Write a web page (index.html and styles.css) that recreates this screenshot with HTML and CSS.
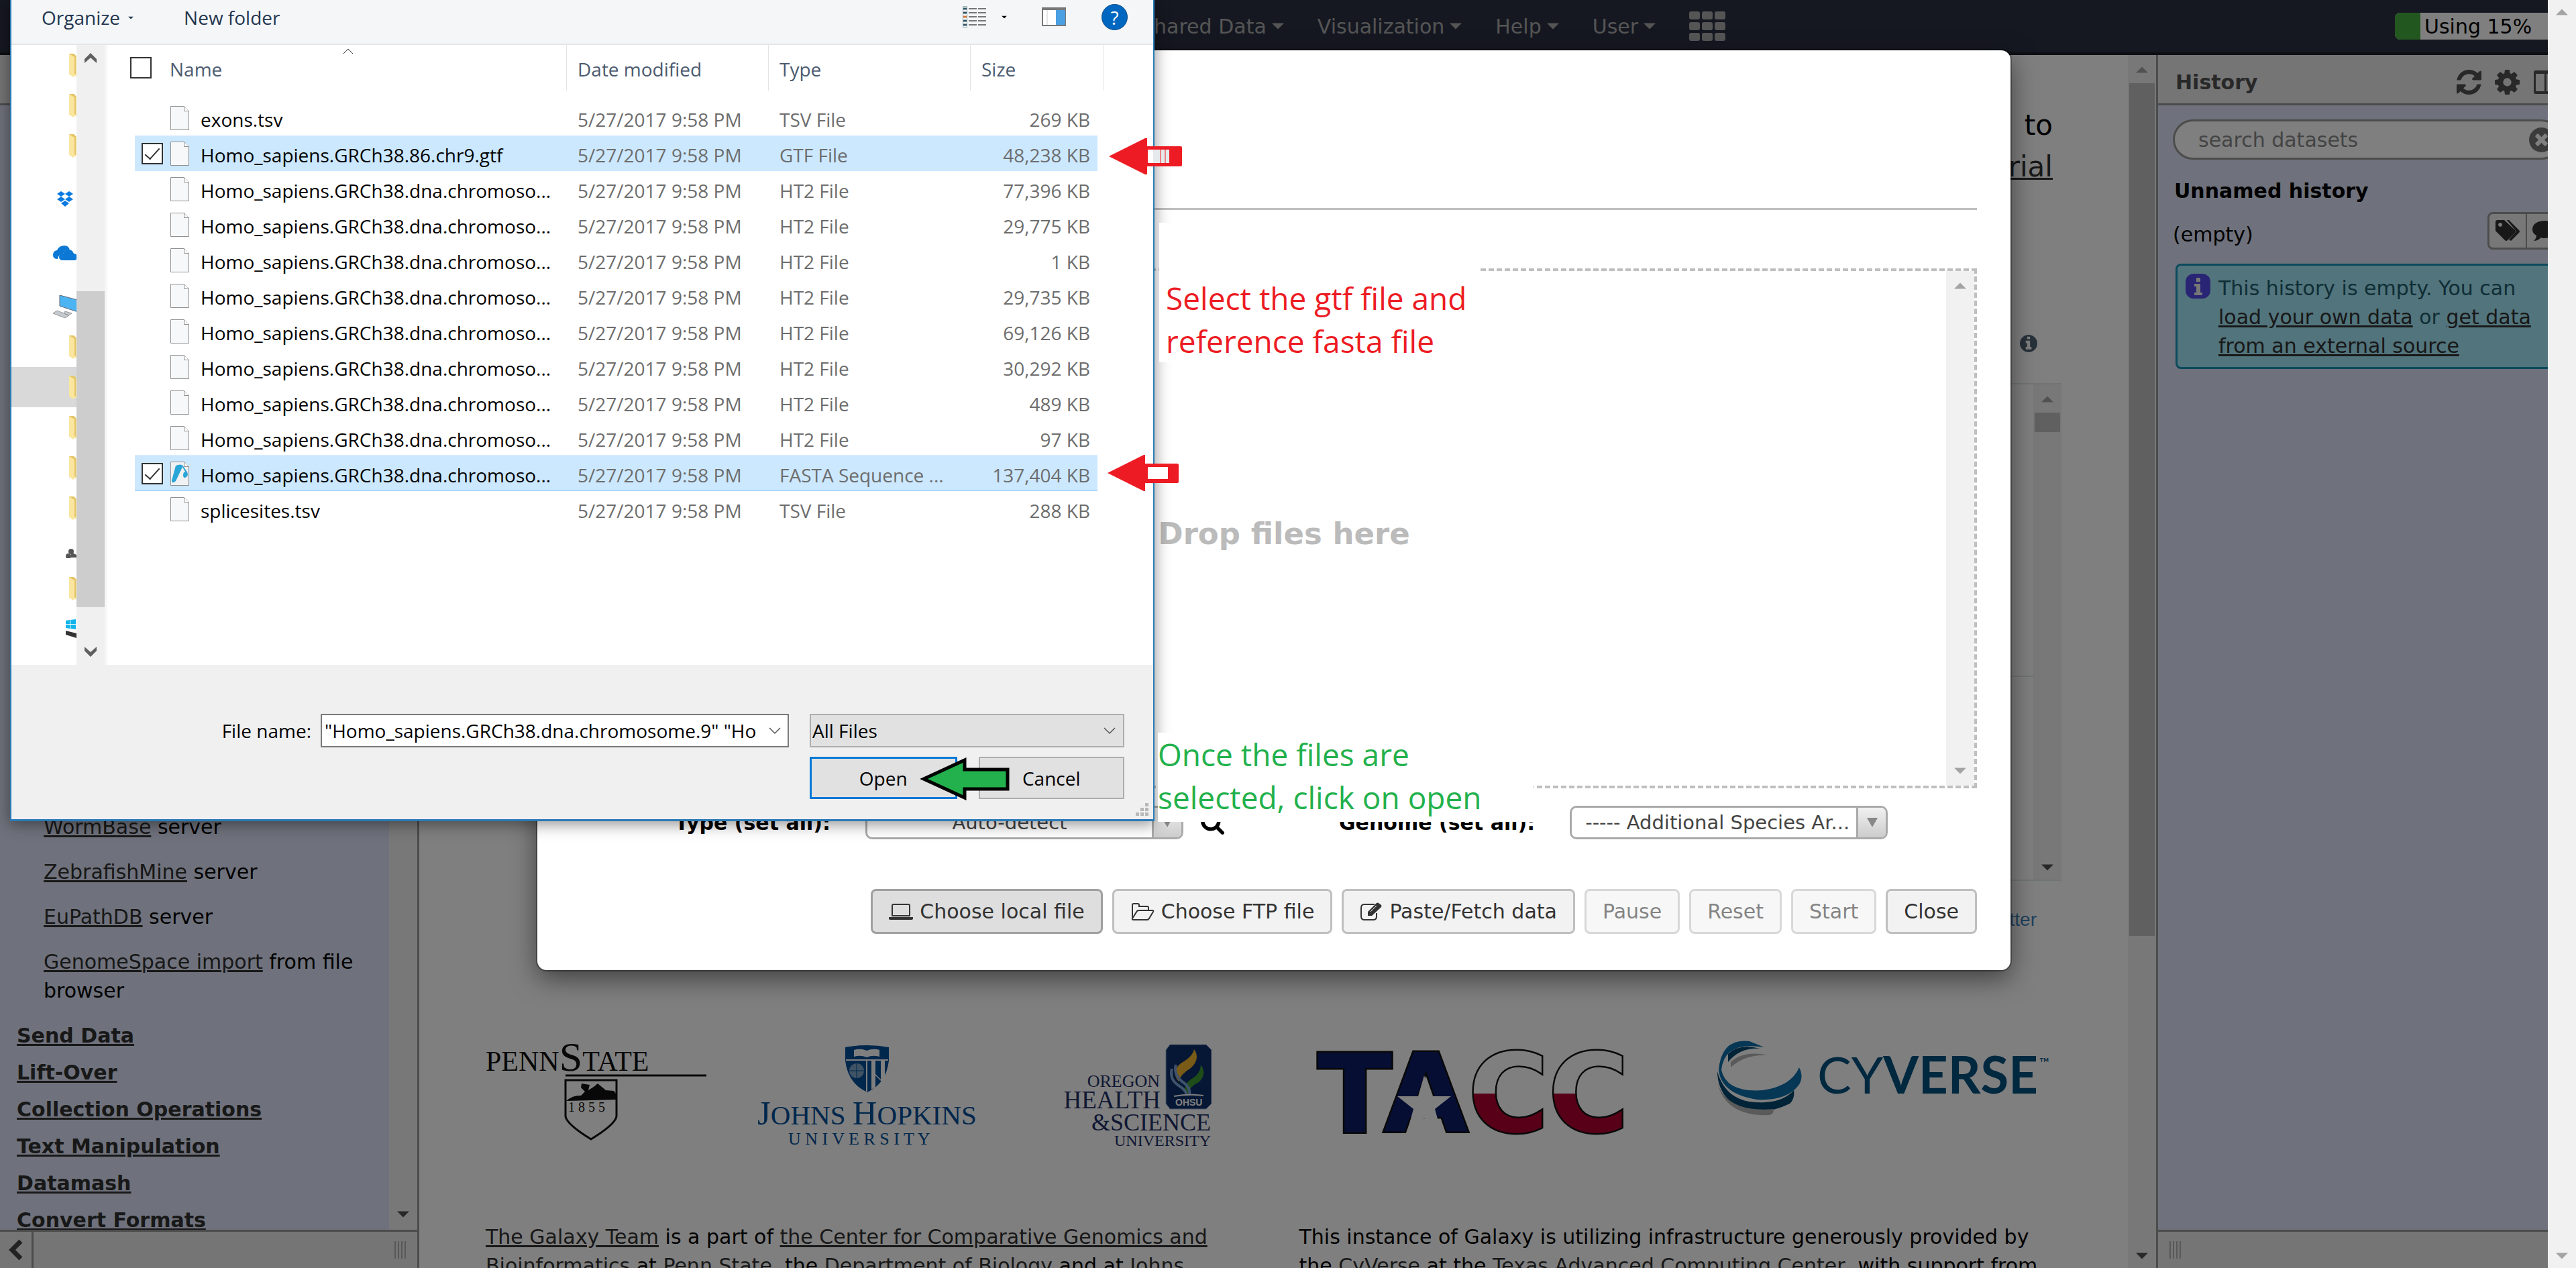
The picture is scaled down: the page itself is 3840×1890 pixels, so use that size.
FILE: index.html
```html
<!DOCTYPE html>
<html lang="en">
<head>
<meta charset="utf-8">
<title>Galaxy</title>
<link rel="stylesheet" href="styles.css">
</head>
<body>
<svg class="sprite" aria-hidden="true">
  <symbol id="i-folder" viewBox="0 0 24 36"><path d="M0 1h7l3 3h14v30H8l-2 2-4-3-2-1z" fill="#fbe6a0"/><path d="M0 1h7l3 3v28l-2-1V6L3 3z" fill="#e3c566"/></symbol>
  <symbol id="i-file" viewBox="0 0 28 36"><path d="M.5.5h20l7 7v28H.5z" fill="#f7f8f9" stroke="#8f8f8f"/><path d="M20.500.500v7h7" fill="#fff" stroke="#8f8f8f"/></symbol>
  <symbol id="i-up" viewBox="0 0 20 10"><path d="M0 10 10 0l10 10z"/></symbol>
  <symbol id="i-down" viewBox="0 0 20 10"><path d="M0 0h20L10 10z"/></symbol>
  <symbol id="i-chev" viewBox="0 0 20 12"><path d="M2 2l8 8 8-8" fill="none" stroke="#555" stroke-width="1.500"/></symbol>
  <symbol id="i-info" viewBox="128 128 1536 1536"><path d="M1152 1376v-160q0-14-9-23t-23-9h-96v-512q0-14-9-23t-23-9h-320q-14 0-23 9t-9 23v160q0 14 9 23t23 9h96v320h-96q-14 0-23 9t-9 23v160q0 14 9 23t23 9h448q14 0 23-9t9-23zm-128-896v-160q0-14-9-23t-23-9h-192q-14 0-23 9t-9 23v160q0 14 9 23t23 9h192q14 0 23-9t9-23zm640 416q0 209-103 385.500t-279.500 279.500-385.500 103-385.500-103-279.500-279.500-103-385.500 103-385.500 279.500-279.500 385.500-103 385.500 103 279.500 279.500 103 385.500z"/></symbol>
</svg>

<div class="page">
  <div class="app">
    <header class="masthead">
      <nav class="menu" aria-label="Main">
        <a href="#">Shared Data<svg class="tri"><use href="#i-down"/></svg></a>
        <a href="#">Visualization<svg class="tri"><use href="#i-down"/></svg></a>
        <a href="#">Help<svg class="tri"><use href="#i-down"/></svg></a>
        <a href="#">User<svg class="tri"><use href="#i-down"/></svg></a>
        <a href="#" aria-label="Apps"><svg class="apps" viewBox="0 0 54 44"><g fill="#aaa"><rect width="16" height="12" rx="3"/><rect x="19" width="16" height="12" rx="3"/><rect x="38" width="16" height="12" rx="3"/><rect y="16" width="16" height="12" rx="3"/><rect x="19" y="16" width="16" height="12" rx="3"/><rect x="38" y="16" width="16" height="12" rx="3"/><rect y="32" width="16" height="12" rx="3"/><rect x="19" y="32" width="16" height="12" rx="3"/><rect x="38" y="32" width="16" height="12" rx="3"/></g></svg></a>
      </nav>
      <div class="quota"><span class="quota-bar"></span><span>Using 15%</span></div>
    </header>

    <aside class="panel">
      <div class="panel-head"></div>
      <div class="tools">
        <div class="tool-list">
          <p class="tool"><a href="#">WormBase</a> server</p>
          <p class="tool"><a href="#">ZebrafishMine</a> server</p>
          <p class="tool"><a href="#">EuPathDB</a> server</p>
          <p class="tool"><a href="#">GenomeSpace import</a> from file browser</p>
          <a class="section" href="#">Send Data</a>
          <a class="section" href="#">Lift-Over</a>
          <a class="section" href="#">Collection Operations</a>
          <a class="section" href="#">Text Manipulation</a>
          <a class="section" href="#">Datamash</a>
          <a class="section" href="#">Convert Formats</a>
        </div>
        <div class="bar bar-end"><svg class="tri dark"><use href="#i-down"/></svg></div>
      </div>
      <div class="panel-foot">
        <button class="collapse" aria-label="Collapse panel"><svg viewBox="0 0 24 32" width="24" height="32"><path d="M19 3 6 16l13 13" fill="none" stroke="#444" stroke-width="7"/></svg></button>
        <span class="grip"></span>
      </div>
    </aside>

    <main class="center">
      <div class="center-body">
        <p class="hero">to<br><a href="#">tutorial</a></p>
        <div class="feed-head"><svg class="feed-info"><use href="#i-info"/></svg></div>
        <div class="feed">
          <div class="feed-list"><div class="tweet"></div></div>
          <div class="bar bar-split">
            <svg class="tri"><use href="#i-up"/></svg>
            <span class="thumb thumb-small"></span>
            <svg class="tri dark"><use href="#i-down"/></svg>
          </div>
        </div>
        <p class="feed-more"><a href="#">View on Twitter</a></p>
        <div class="columns">
          <section>
            <div class="logos">
              <svg width="329" height="160" viewBox="0 0 329 160" role="img" aria-label="Penn State">
                <text class="lg-serif" y="45" font-size="42">PENN<tspan font-size="62">S</tspan>TATE</text>
                <path d="M119 52h210" stroke="#111" stroke-width="3"/>
                <path d="M119 59h76v54q-2 12-38 34-36-22-38-34z" fill="none" stroke="#111" stroke-width="3"/>
                <path d="M120 90q10-9 22-8l6-6-6-6 1-6 12 2-2 8 8-5 6-5 12 10 12 1 3 4v9z" fill="#111"/>
                <text class="lg-serif" x="123" y="106" font-size="20">1 8 5 5</text>
              </svg>
              <svg width="328" height="160" viewBox="0 0 328 160" role="img" aria-label="Johns Hopkins University">
                <path d="M131 10q33-6 65 0v20q-4 34-32 47-29-13-33-47z" fill="#004e98"/>
                <path d="M132 29h63M163 29v47" stroke="#fff" stroke-width="2"/><path d="M144 14q10-3 19 1 10-4 19-1v10q-10-3-19 1-9-4-19-1z" fill="#fff"/>
                <circle cx="148" cy="45" r="11" fill="#7fa6cb"/><path d="M137 45h22M148 34v22" stroke="#004e98"/>
                <path d="M170 30h6v20l8 8V30h6v36l-8-8-6-6v18l-6 3z" fill="#fff"/>
                <text class="lg-serif blue" y="125" font-size="51">J<tspan font-size="41">OHNS </tspan>H<tspan font-size="41">OPKINS</tspan></text>
                <text class="lg-serif blue" x="46" y="155" font-size="26">U N I V E R S I T Y</text>
              </svg>
              <svg width="273" height="160" viewBox="0 0 273 160" role="img" aria-label="Oregon Health and Science University">
                <path d="M211 6h54l8 8v80l-8 8h-54l-6-8V14z" fill="#0c2f6b" stroke="#9fb4d8"/>
                <path d="M247 13q10 14-5 28-16 10-18 20-12-14 3-27 18-10 20-21z" fill="#f3b42c"/>
                <path d="M257 36q10 14-3 26-16 8-17 20-10-13 5-24 15-8 15-22z" fill="#3f9b35"/>
                <path d="M220 36q-4 14 9 25 13 8 11 20M214 42q-4 16 10 25 11 7 12 14" fill="none" stroke="#7fa6d8" stroke-width="4"/>
                <path d="M217 83q22-4 44-1" stroke="#fff" stroke-width="2" fill="none"/>
                <text class="lg-ohsu" x="219" y="97" font-size="14">OHSU</text>
                <g class="lg-serif navy" text-anchor="end"><text x="196" y="69" font-size="26">OREGON</text><text x="197" y="101" font-size="37">HEALTH</text><text x="272" y="134" font-size="36">&amp;SCIENCE</text><text x="272" y="157" font-size="24">UNIVERSITY</text></g>
              </svg>
            </div>
            <p class="credit"><a href="#">The Galaxy Team</a> is a part of <a href="#">the Center for Comparative Genomics and Bioinformatics</a> at <a href="#">Penn State</a>, the <a href="#">Department of Biology</a> and at <a href="#">Johns</a></p>
          </section>
          <section>
            <div class="logos">
              <svg width="545" height="160" viewBox="0 0 545 160" role="img" aria-label="TACC">
                <defs><linearGradient id="cc" x1="0" y1="0" x2="0" y2="1"><stop offset=".5" stop-color="#fff"/><stop offset=".5" stop-color="#b00030"/></linearGradient></defs>
                <text class="lg-tacc" x="27" y="136" font-size="163"><tspan fill="#0d1c66">TA</tspan><tspan fill="url(#cc)">CC</tspan></text>
                <path d="m186 52 9 31h31l-24 19 9 33-25-19-25 19 9-33-24-19h31z" fill="#fff"/>
              </svg>
              <svg width="500" height="115" viewBox="0 0 500 115" role="img" aria-label="CyVerse">
                <path d="M72 10Q12 0 8 44 16 78 70 74q42-6 54-34 8 16-2 28-18 22-60 20Q8 80 4 44 8-4 50 1z" fill="#0c6fab"/>
                <path d="M2 46Q16 96 74 92q28-2 42-18 2 12-6 20-54 26-92-6Q2 70 2 46zM18 20Q34 4 66 12q-30-2-48 20z" fill="#00466f"/>
                <path d="M2 62q14 46 84 40 0 8-6 9Q14 114 2 62zM22 32q20-18 56-10-34-2-56 18z" fill="#b5b5b5"/>
                <text class="lg-cy" x="151" y="79" font-size="76">CY<tspan font-weight="700">VERSE</tspan></text>
                <text class="lg-cy" x="482" y="40" font-size="20">™</text>
              </svg>
            </div>
            <p class="credit">This instance of Galaxy is utilizing infrastructure generously provided by the <a href="#">CyVerse</a> at the <a href="#">Texas Advanced Computing Center</a>, with support from</p>
          </section>
        </div>
      </div>
      <div class="bar bar-split">
        <svg class="tri"><use href="#i-up"/></svg>
        <span class="thumb thumb-main"></span>
        <svg class="tri dark"><use href="#i-down"/></svg>
      </div>
    </main>

    <aside class="panel history">
      <div class="panel-head">
        <h2>History</h2>
        <svg width="37" height="37" viewBox="128 128 1536 1536"><path d="M1639 1056q0 5-1 7-64 268-268 434.500t-478 166.500q-146 0-282.500-55t-243.500-157l-129 129q-19 19-45 19t-45-19-19-45v-448q0-26 19-45t45-19h448q26 0 45 19t19 45-19 45l-137 137q71 66 161 102t187 36q134 0 250-65t186-179q11-17 53-117 8-23 30-23h192q13 0 22.500 9.500t9.500 22.500zm25-800v448q0 26-19 45t-45 19h-448q-26 0-45-19t-19-45 19-45l138-138q-148-137-349-137-134 0-250 65t-186 179q-11 17-53 117-8 23-30 23h-199q-13 0-22.500-9.500t-9.500-22.500v-7q65-268 270-434.500t480-166.500q146 0 284 55.500t245 156.500l130-129q19-19 45-19t45 19 19 45z"/></svg>
        <svg width="37" height="37" viewBox="128 128 1536 1536"><path d="M1152 896q0-106-75-181t-181-75-181 75-75 181 75 181 181 75 181-75 75-181zm512-109v222q0 12-8 23t-20 13l-185 28q-19 54-39 91 35 50 107 138 10 12 10 25t-9 23q-27 37-99 108t-94 71q-12 0-26-9l-138-108q-44 23-91 38-16 136-29 186-7 28-36 28h-222q-14 0-24.500-8.500t-11.500-21.500l-28-184q-49-16-90-37l-141 107q-10 9-25 9-14 0-25-11-126-114-165-168-7-10-7-23 0-12 8-23 15-21 51-66.500t54-70.500q-27-50-41-99l-183-27q-13-2-21-12.500t-8-23.500v-222q0-12 8-23t19-13l186-28q14-46 39-92-40-57-107-138-10-12-10-24 0-10 9-23 26-36 98.500-107.500t94.500-71.500q13 0 26 10l138 107q44-23 91-38 16-136 29-186 7-28 36-28h222q14 0 24.500 8.500t11.500 21.500l28 184q49 16 90 37l142-107q9-9 24-9 13 0 25 10 129 119 165 170 7 8 7 22 0 12-8 23-15 21-51 66.500t-54 70.500q26 50 41 98l183 28q13 2 21 12.500t8 23.500z"/></svg>
        <svg width="37" height="37" viewBox="0 0 37 37"><path d="M1 4q0-3 3-3h29q3 0 3 3v29q0 3-3 3H4q-3 0-3-3zm3 2v26h13V6zm16 0v26h13V6z" fill-rule="evenodd"/></svg>
      </div>
      <div class="history-body">
        <div class="search">
          <input type="text" aria-label="search datasets" placeholder="search datasets">
          <svg width="37" height="37" viewBox="128 128 1536 1536" fill="#777"><path d="M1277 1122q0-26-19-45l-181-181 181-181q19-19 19-45 0-27-19-46l-90-90q-19-19-46-19-26 0-45 19l-181 181-181-181q-19-19-45-19-27 0-46 19l-90 90q-19 19-19 46 0 26 19 45l181 181-181 181q-19 19-19 45 0 27 19 46l90 90q19 19 46 19 26 0 45-19l181-181 181 181q19 19 45 19 27 0 46-19l90-90q19-19 19-46zm387-226q0 209-103 385.500t-279.500 279.500-385.500 103-385.500-103-279.500-279.500-103-385.500 103-385.500 279.500-279.500 385.500-103 385.500 103 279.500 279.500 103 385.500z"/></svg>
        </div>
        <h3>Unnamed history</h3>
        <div class="history-size">
          <span class="size-text">(empty)</span>
          <span class="tag-buttons">
            <button aria-label="Edit tags"><svg width="38" height="32" viewBox="0 0 38 32"><path d="M1 3q0-3 3-3h10l16 15q2 2 0 4L19 30q-2 2-4 0L1 16zm7 1a3 3 0 1 0 .1 0z" fill-rule="evenodd"/><path d="M18 0h3l15 15q2 2 0 4L24 31l-3-2 11-12z"/></svg></button>
            <button aria-label="Annotate"><svg width="38" height="32" viewBox="0 0 38 32"><path d="M19 1c10 0 18 5 18 13s-8 13-18 13c-2 0-4 0-5-1-3 3-7 5-11 5 2-2 4-4 4-8-4-2-6-5-6-9C1 6 9 1 19 1z"/></svg></button>
          </span>
        </div>
        <div class="notice">
          <span class="notice-icon"><svg width="12" height="26" viewBox="0 0 12 26"><path d="M3 0h6v6H3zM0 9h9v13h3v4H0v-4h3v-9H0z" fill="#eee"/></svg></span>
          <p>This history is empty. You can<br><a href="#">load your own data</a> or <a href="#">get data</a><br><a href="#">from an external source</a></p>
        </div>
      </div>
      <div class="panel-foot"><span class="grip"></span></div>
    </aside>
  </div>

  <div class="backdrop">
    <div class="modal" role="dialog" aria-label="Upload">
      <div class="modal-head"></div>
      <div class="drop">
        <div class="drop-label"><svg width="60" height="44" viewBox="0 0 60 44"><path d="M2 40h56V4H2zM20 26l10-12 10 12" fill="none" stroke="#bbb" stroke-width="4"/></svg>Drop files here</div>
        <div class="bar bar-split plain">
          <svg class="tri"><use href="#i-up"/></svg>
          <svg class="tri"><use href="#i-down"/></svg>
        </div>
      </div>
      <div class="options">
        <label for="type">Type (set all):</label>
        <span class="pick pick-center"><select id="type"><option>Auto-detect</option></select><span class="pick-arrow"><svg viewBox="0 0 16 14" width="16" height="14"><path d="M0 0h16L8 14z"/></svg></span></span>
        <svg class="lookup" width="35" height="35" viewBox="64 128 1664 1664"><path d="M1216 832q0-185-131.500-316.500t-316.500-131.500-316.500 131.500-131.500 316.500 131.500 316.500 316.500 131.500 316.500-131.500 131.500-316.500zm512 832q0 52-38 90t-90 38q-54 0-90-38l-343-342q-179 124-399 124-143 0-273.500-55.500t-225-150-150-225-55.500-273.500 55.500-273.500 150-225 225-150 273.500-55.500 273.500 55.500 225 150 150 225 55.500 273.500q0 220-124 399l343 343q37 37 37 90z"/></svg>
        <label for="genome">Genome (set all):</label>
        <span class="pick"><select id="genome"><option>----- Additional Species Ar...</option></select><span class="pick-arrow"><svg viewBox="0 0 16 14" width="16" height="14"><path d="M0 0h16L8 14z"/></svg></span></span>
      </div>
      <div class="actions">
        <button class="active"><svg width="36" height="26" viewBox="0 0 36 26"><path d="M7 2h22q2 0 2 2v15H5V4q0-2 2-2z" fill="none" stroke="#333" stroke-width="2"/><path d="M0 21h36v2q0 2-3 2H3q-3 0-3-2z"/></svg>Choose local file</button>
        <button><svg width="36" height="28" viewBox="0 0 36 28"><path d="M3 23V4q0-2 2-2h6q2 0 2 2v2h12q2 0 2 2v4M3 24l7-11q1-1 3-1h20q2 0 1 2l-6 10q-1 2-3 2H5q-3 0-2-2z" fill="none" stroke="#333" stroke-width="2"/></svg>Choose FTP file</button>
        <button><svg width="34" height="28" viewBox="0 0 34 28"><path d="M22 3H7Q2 3 2 8v13q0 5 5 5h13q5 0 5-5v-5" fill="none" stroke="#333" stroke-width="2"/><path d="M12 20v-6L25 1q2-1 3 0l4 3q1 1 0 3L18 20z"/><path d="m16 14 9-9" stroke="#fff"/></svg>Paste/Fetch data</button>
        <button disabled>Pause</button>
        <button disabled>Reset</button>
        <button disabled>Start</button>
        <button>Close</button>
      </div>
    </div>
  </div>

  <div class="note note-red">Select the gtf file and<br>reference fasta file</div>
  <div class="note note-green">Once the files are<br>selected, click on open</div>

  <div class="picker" role="dialog" aria-label="Open">
    <div class="picker-bar">
      <button>Organize <svg width="8" height="5" viewBox="0 0 20 10"><use href="#i-down"/></svg></button>
      <button>New folder</button>
      <span class="picker-tools">
        <svg width="36" height="32" viewBox="0 0 36 32"><path d="M.5.5h6v31h-6z" fill="#fff" stroke="#8aa"/><path d="M1 4h5M1 10h5M1 22h5M1 28h5" stroke="#356" stroke-width="3"/><path d="M1 16h5" stroke="#c73" stroke-width="3"/><path d="M9 4h27M9 10h27M9 16h27M9 22h27M9 28h27" stroke="#777" stroke-width="2" stroke-dasharray="12 2"/></svg>
        <svg class="tool-caret" width="8" height="5" viewBox="0 0 20 10"><use href="#i-down"/></svg>
        <svg width="36" height="28" viewBox="0 0 36 28"><path d="M1 1h34v26H1z" fill="#fff" stroke="#777" stroke-width="2"/><path d="M0 0h36v4H0z" fill="#777"/><path d="M21 4h14v22H21z" fill="#4b9fe3"/><path d="M8 4v22" stroke="#ccc"/></svg>
        <span class="help">?</span>
      </span>
    </div>
    <div class="picker-main">
      <div class="tree">
        <div class="tree-row"><svg class="fold"><use href="#i-folder"/></svg></div>
        <div class="tree-row"><svg class="fold"><use href="#i-folder"/></svg></div>
        <div class="tree-row"><svg class="fold"><use href="#i-folder"/></svg></div>
        <div class="tree-row top-level"><svg width="36" height="24" viewBox="-6 0 36 24" fill="#0a7be0"><path d="m6 0 6 4-6 4-6-4zm12 0 6 4-6 4-6-4zM6 8l6 4-6 4-6-4zm12 0 6 4-6 4-6-4zm-6 6 6 4-6 5-6-5z"/></svg></div>
        <div class="tree-row top-level"><svg width="36" height="22" viewBox="0 0 36 22" fill="#0a78d4"><path d="M7 20q-7 0-7-6t6-7Q9 0 17 0q6 0 8 6-8 0-10 6-7 1-8 8z"/><path d="M15 22q-6 0-6-5t6-5q2-6 8-6t8 6q5 0 5 5t-5 5z"/></svg></div>
        <div class="tree-row top-level"><svg width="36" height="34" viewBox="0 0 36 34"><path d="m10 0 30 8v18L10 16z" fill="#4db4f3" stroke="#567"/><path d="m18 24 10 3-5 3-7-3zM6 23l18 7-6 4-18-7z" fill="#c4cacf" stroke="#999"/></svg></div>
        <div class="tree-row"><svg class="fold"><use href="#i-folder"/></svg></div>
        <div class="tree-row current"><svg class="fold"><use href="#i-folder"/></svg></div>
        <div class="tree-row"><svg class="fold"><use href="#i-folder"/></svg></div>
        <div class="tree-row"><svg class="fold"><use href="#i-folder"/></svg></div>
        <div class="tree-row"><svg class="fold"><use href="#i-folder"/></svg></div>
        <div class="tree-row drive share"><svg width="24" height="14" viewBox="0 0 24 14" fill="#555"><circle cx="8" cy="4" r="4"/><circle cx="4" cy="11" r="4"/><path d="m8 5 10 5v3H8z"/></svg></div>
        <div class="tree-row"><svg class="fold"><use href="#i-folder"/></svg></div>
        <div class="tree-row drive"><svg width="24" height="28" viewBox="0 0 24 28"><path d="m0 2 6-1v6H0zm7-1 8-1v7H7zM0 8h6v6l-6-1zm7 0h8v7l-8-1z" fill="#12b5ea"/><path d="m0 17 16 4v7L0 23z" fill="#333"/></svg></div>
      </div>
      <div class="bar bar-split tree-bar">
        <svg width="18" height="15" viewBox="0 0 18 15"><path d="M0 9 9 0l9 9v6L9 7l-9 8z"/></svg>
        <span class="thumb thumb-tree"></span>
        <svg width="18" height="15" viewBox="0 0 18 15"><path d="M0 6l9 9 9-9V0L9 8 0 0z"/></svg>
      </div>
      <div class="files">
        <table>
          <colgroup><col class="c-gap"><col class="c-check"><col class="c-name"><col class="c-date"><col class="c-type"><col class="c-size"><col class="c-gap"></colgroup>
          <thead><tr><th colspan="2"><input type="checkbox" aria-label="Select all"></th><th class="sorted">Name<svg class="sort" width="16" height="9" viewBox="0 0 16 9"><path d="m1 8 7-7 7 7" fill="none" stroke="#333"/></svg></th><th>Date modified</th><th>Type</th><th colspan="2">Size</th></tr></thead>
          <tbody>
            <tr><td></td><td></td><td><svg class="doc"><use href="#i-file"/></svg>exons.tsv</td><td>5/27/2017 9:58 PM</td><td>TSV File</td><td>269 KB</td><td></td></tr>
            <tr class="picked"><td></td><td><input type="checkbox" checked aria-label="Homo_sapiens.GRCh38.86.chr9.gtf"></td><td><svg class="doc"><use href="#i-file"/></svg>Homo_sapiens.GRCh38.86.chr9.gtf</td><td>5/27/2017 9:58 PM</td><td>GTF File</td><td>48,238 KB</td><td></td></tr>
            <tr><td></td><td></td><td><svg class="doc"><use href="#i-file"/></svg>Homo_sapiens.GRCh38.dna.chromoso...</td><td>5/27/2017 9:58 PM</td><td>HT2 File</td><td>77,396 KB</td><td></td></tr>
            <tr><td></td><td></td><td><svg class="doc"><use href="#i-file"/></svg>Homo_sapiens.GRCh38.dna.chromoso...</td><td>5/27/2017 9:58 PM</td><td>HT2 File</td><td>29,775 KB</td><td></td></tr>
            <tr><td></td><td></td><td><svg class="doc"><use href="#i-file"/></svg>Homo_sapiens.GRCh38.dna.chromoso...</td><td>5/27/2017 9:58 PM</td><td>HT2 File</td><td>1 KB</td><td></td></tr>
            <tr><td></td><td></td><td><svg class="doc"><use href="#i-file"/></svg>Homo_sapiens.GRCh38.dna.chromoso...</td><td>5/27/2017 9:58 PM</td><td>HT2 File</td><td>29,735 KB</td><td></td></tr>
            <tr><td></td><td></td><td><svg class="doc"><use href="#i-file"/></svg>Homo_sapiens.GRCh38.dna.chromoso...</td><td>5/27/2017 9:58 PM</td><td>HT2 File</td><td>69,126 KB</td><td></td></tr>
            <tr><td></td><td></td><td><svg class="doc"><use href="#i-file"/></svg>Homo_sapiens.GRCh38.dna.chromoso...</td><td>5/27/2017 9:58 PM</td><td>HT2 File</td><td>30,292 KB</td><td></td></tr>
            <tr><td></td><td></td><td><svg class="doc"><use href="#i-file"/></svg>Homo_sapiens.GRCh38.dna.chromoso...</td><td>5/27/2017 9:58 PM</td><td>HT2 File</td><td>489 KB</td><td></td></tr>
            <tr><td></td><td></td><td><svg class="doc"><use href="#i-file"/></svg>Homo_sapiens.GRCh38.dna.chromoso...</td><td>5/27/2017 9:58 PM</td><td>HT2 File</td><td>97 KB</td><td></td></tr>
            <tr class="picked focused"><td></td><td><input type="checkbox" checked aria-label="Homo_sapiens.GRCh38.dna.chromosome.9"></td><td><svg class="doc" viewBox="0 0 28 36"><path d="M.5.5h20l7 7v28H.5z" fill="#f0f1f2" stroke="#8f8f8f"/><path d="M20.500.500v7h7" fill="#fff" stroke="#8f8f8f"/><path d="M8 6q9-4 12 2l4 6q4 6 0 9-5 3-5-3 0-4 3-5l-4-7-10 21q-6 5-6-1z" fill="#2aa5d8"/></svg>Homo_sapiens.GRCh38.dna.chromoso...</td><td>5/27/2017 9:58 PM</td><td>FASTA Sequence ...</td><td>137,404 KB</td><td></td></tr>
            <tr><td></td><td></td><td><svg class="doc"><use href="#i-file"/></svg>splicesites.tsv</td><td>5/27/2017 9:58 PM</td><td>TSV File</td><td>288 KB</td><td></td></tr>
          </tbody>
        </table>
      </div>
    </div>
    <div class="picker-foot">
      <label for="fname">File name:</label>
      <span class="combo"><input id="fname" type="text" value='"Homo_sapiens.GRCh38.dna.chromosome.9" "Homo_sapiens.GRCh38.86.chr9.gtf"'><svg width="20" height="12"><use href="#i-chev"/></svg></span>
      <span class="filter"><select aria-label="File type"><option>All Files</option></select><svg width="20" height="12"><use href="#i-chev"/></svg></span>
      <span class="picker-actions"><button class="primary">Open</button><button>Cancel</button></span>
    </div>
    <svg class="resize" width="20" height="20" viewBox="0 0 20 20" fill="#b8b8b8"><path d="M14 0h5v5h-5zM14 7h5v5h-5zM7 7h5v5H7zM14 14h5v5h-5zM7 14h5v5H7zM0 14h5v5H0z"/></svg>
  </div>

  <svg class="arrow arrow-one" width="110" height="54" viewBox="0 0 110 54"><path d="M0 27 54 0h3v12h50q2 0 2 2v26q0 2-2 2H57v12h-3z" fill="#ed1c24"/><path d="M58 17h32v20H58z" fill="#e6e9ec"/><path d="M58 17h8v20h-8z" fill="#fff"/><path d="M77 17v20M84 17v20" stroke="#ed1c24"/></svg>
  <svg class="arrow arrow-two" width="108" height="54" viewBox="0 0 108 54"><path d="M0 27 54 0h2v13h48q2 0 2 2v25q0 2-2 2H56v12h-2z" fill="#ed1c24"/><path d="M60 18h30v18H60z" fill="#fff"/></svg>
  <svg class="arrow arrow-open" width="136" height="66" viewBox="0 0 136 66"><path d="M5 33 66 5v14h64v29H66v13z" fill="#22b14c" stroke="#000" stroke-width="5"/></svg>
</div>
<div class="bar bar-split plain page-bar">
  <svg class="tri"><use href="#i-up"/></svg>
  <svg class="tri"><use href="#i-down"/></svg>
</div>
</body>
</html>
```
FILE: styles.css
```css
* { box-sizing: border-box; }
body {
  margin: 0;
  height: 100vh;
  display: flex;
  overflow: hidden;
  background: #fff;
  color: #000;
  font: 30px/43px "DejaVu Sans", Verdana, sans-serif;
}
p, h2, h3 { margin: 0; }
h2, h3 { font-size: 30px; }
a { color: #303030; text-decoration-thickness: 3px; }
svg { flex: none; display: block; }
button, input, select { font: inherit; color: inherit; }
.sprite { position: absolute; width: 0; height: 0; }
.page { flex: 1; position: relative; overflow: hidden; }

/* application frame: runs on under the window scrollbar */
.app {
  width: calc(100% + 41px);
  height: 100%;
  display: grid;
  grid-template: 82px minmax(0, 1fr) / 625px minmax(0, 1fr) 625px;
}
.masthead {
  grid-column: 1 / -1;
  background: #2c3143;
  border-bottom: 4px solid #1d1f29;
  display: flex;
  align-items: center;
  justify-content: space-between;
}
.menu { display: flex; align-items: center; margin-left: 1676px; color: #aaa; }
.menu a { display: flex; align-items: center; gap: 8px; padding: 0 25px; color: #aaa; text-decoration: none; }
.tri { width: 18px; height: 10px; fill: #a3a3a3; }
.menu .tri { fill: #aaa; }
.tri.dark { fill: #505050; }
.apps { width: 54px; height: 44px; }
.quota { display: flex; align-items: center; gap: 6px; width: 269px; height: 40px; background: #fff; border-radius: 8px; overflow: hidden; }
.quota-bar { width: 38px; height: 40px; background: #44ae40; }

/* side panels */
.panel { display: flex; flex-direction: column; min-height: 0; background: #dfe5f9; border-right: 3px solid #999; }
.history { border-right: 0; border-left: 3px solid #999; }
.panel-head { flex: none; height: 75px; background: #ebebeb; border-bottom: 3px solid #999; display: flex; align-items: center; gap: 20px; padding: 8px 26px 0; fill: #505050; color: #505050; }
.panel-head h2 { margin-right: auto; }
.panel-foot { flex: none; height: 57px; background: #ebebeb; border-top: 3px solid #999; display: flex; align-items: center; justify-content: space-between; }
.history .panel-foot { padding-left: 17px; }
.collapse { width: 50px; height: 54px; padding: 0; border: 0; border-right: 3px solid #999; background: none; display: grid; place-items: center; }
.grip { width: 20px; height: 26px; margin-right: 14px; background: repeating-linear-gradient(90deg, #b0b0b0 0 2px, transparent 2px 5px); }
.tools { flex: 1; display: flex; min-height: 0; }
.tool-list { flex: 1; display: flex; flex-direction: column; justify-content: flex-end; align-items: flex-start; overflow: hidden; padding-left: 25px; }
.tool { padding: 0 0 24px 40px; }
.section { font-weight: 700; margin-bottom: 12px; }
.section:last-child { margin-bottom: -7px; }

/* scrollbars */
.bar { flex: none; width: 42px; background: #f1f1f1; display: flex; flex-direction: column; align-items: center; padding: 17px 0 13px; }
.bar-end { justify-content: flex-end; padding-bottom: 18px; }
.bar-split .tri:last-child { margin-top: auto; }
.plain { padding-bottom: 17px; }
.page-bar { padding-top: 13px; padding-bottom: 13px; }
.thumb { width: 38px; background: #c1c1c1; margin-top: 15px; }
.thumb-small { height: 29px; }
.thumb-main { height: 1271px; }

/* centre */
.center { display: flex; min-height: 0; overflow: hidden; background: #fff; }
.center-body { flex: 1; padding: 74px 99px 0; }
.hero { font-size: 42px; line-height: 62px; text-align: right; padding-right: 13px; }
.feed-head { height: 60px; margin: 202px 0 29px; padding-right: 36px; display: flex; align-items: center; justify-content: flex-end; }
.feed-info { width: 26px; height: 26px; fill: #4f6273; }
.feed { width: 55%; margin-left: auto; height: 742px; border: 2px solid #e1e8ed; border-right: 0; display: flex; }
.feed-list { flex: 1; }
.tweet { height: 436px; border-bottom: 2px solid #e1e8ed; }
.feed-more { margin-top: 36px; padding-right: 37px; text-align: right; font-family: "Liberation Sans", sans-serif; font-size: 28px; }
.feed-more a { color: #3f84bd; text-decoration: none; }
.columns { display: grid; grid-template-columns: 1fr 1fr; gap: 76px; margin-top: 159px; }
.logos { display: flex; gap: 76px; height: 160px; margin-bottom: 111px; }
.lg-serif { font-family: "Liberation Serif", serif; fill: #111; }
.blue { fill: #004e98; }
.navy { fill: #1d2f66; }
.lg-ohsu { font-family: "Liberation Sans", sans-serif; font-weight: 700; fill: #fff; }
.lg-tacc { font-family: "DejaVu Sans", sans-serif; font-weight: 700; stroke: #111; stroke-width: 5px; paint-order: stroke; }
.lg-cy { font-family: Lato, sans-serif; fill: #00507f; }

/* history */
.history-body { flex: 1; min-height: 0; overflow: hidden; padding: 21px 21px 0 22px; }
.search { height: 60px; border: 3px solid #999; border-radius: 30px; background: #fff; display: flex; align-items: center; padding: 0 8px 0 35px; }
.search input { flex: 1; min-width: 0; border: 0; padding: 0; background: none; outline: 0; }
.search input::placeholder { color: #888; }
.history h3 { margin: 25px 0 10px 2px; }
.history-size { display: flex; justify-content: space-between; align-items: center; }
.size-text { padding-top: 10px; }
.tag-buttons { display: flex; border: 3px solid #999; border-radius: 8px; height: 56px; margin-right: -4px; background: #f0f0f0; }
.tag-buttons button { width: 54px; border: 0; padding: 0; background: none; display: grid; place-items: center; fill: #303030; }
.tag-buttons button + button { border-left: 2px solid #999; }
.notice { margin: 21px -10px 0 4px; height: 157px; display: flex; gap: 12px; padding: 12px; background: #a4e8f8; border: 3px solid #1894b8; border-radius: 8px; color: #205c6c; }
.notice-icon { width: 37px; height: 37px; border-radius: 12px; background: #5248e6; display: grid; place-items: center; }
.notice p { white-space: nowrap; }

/* upload window */
.backdrop { position: absolute; inset: 0; background: rgba(0, 0, 0, .5); display: flex; justify-content: center; align-items: flex-start; padding-top: 75px; }
.modal { width: min(2196px, 92%); background: #fff; border-radius: 14px; padding: 0 50px 54px; box-shadow: 0 0 0 2px rgba(0, 0, 0, .3), 0 12px 38px rgba(0, 0, 0, .5); }
.modal-head { height: 238px; border-bottom: 3px solid #bfbfbf; }
.drop { height: 775px; margin-top: 87px; border: 4px dashed #bfbfbf; display: flex; }
.drop-label { flex: 1; display: flex; gap: 12px; align-items: center; justify-content: center; padding-top: 16px; font-weight: 700; font-size: 45px; color: #bbb; }
.options { display: flex; align-items: center; margin: 26px 0 74px; padding-left: 155px; }
.options label { font-weight: 700; margin-right: 52px; }
.lookup { margin: 0 171px 0 26px; }
.pick { display: flex; width: 474px; height: 50px; border: 3px solid #aaa; border-radius: 10px; overflow: hidden; background: #fff; color: #444; font-size: 29px; }
.pick select { flex: 1; min-width: 0; appearance: none; border: 0; background: none; padding: 0 0 0 20px; }
.pick-center select { text-align: center; text-align-last: center; padding: 0; }
.pick-arrow { width: 44px; border-left: 3px solid #aaa; background: linear-gradient(#f1f1f1, #ccc); display: grid; place-items: center; fill: #888; }
.actions { display: flex; justify-content: flex-end; gap: 14px; }
.actions button { height: 67px; padding: 0 24px; border: 3px solid #bfbfbf; border-radius: 8px; background: #f2f2f2; color: #333; display: flex; align-items: center; gap: 10px; fill: #333; }
.actions .active { background: #dedede; border-color: #a0a0a0; }
.actions button:disabled { opacity: .6; }

/* annotations */
.note { position: absolute; background: #fff; font: 46px/64px "Open Sans", sans-serif; white-space: nowrap; z-index: 1; }
.note-red { left: 1728px; top: 332px; width: 479px; padding: 80px 0 0 10px; color: #ed1c24; }
.note-green { left: 1726px; top: 1092px; width: 560px; height: 133px; color: #22b14c; }
.arrow { position: absolute; z-index: 3; }
.arrow-one { left: 1653px; top: 206px; }
.arrow-two { left: 1651px; top: 678px; }
.arrow-open { left: 1372px; top: 1128px; }

/* system file picker */
.picker {
  position: absolute;
  left: 15px;
  top: 0;
  width: 1706px;
  border: 2px solid #2a7ab5;
  border-top: 0;
  border-bottom-width: 3px;
  background: #f0f0f0;
  box-shadow: 0 4px 22px rgba(0, 0, 0, .45);
  font: 28px/40px "Open Sans", "Segoe UI", sans-serif;
}
.picker-bar { height: 67px; background: #f4f6f8; border-bottom: 2px solid #e6e6e6; display: flex; align-items: flex-start; gap: 75px; padding: 6px 38px 0 45px; color: #24364f; }
.picker-bar > button { border: 0; padding: 0; background: none; display: flex; align-items: center; gap: 12px; fill: #24364f; }
.picker-tools { margin-left: auto; display: flex; align-items: center; height: 38px; }
.tool-caret { margin: 0 52px 0 22px; }
.help { width: 39px; height: 39px; margin-left: 53px; border-radius: 50%; background: #0067c0; border: 1px solid #0a4a86; color: #fff; text-align: center; line-height: 38px; }
.picker-main { display: flex; height: 924px; background: #fff; }
.tree { width: 97px; overflow: hidden; }
.tree-row { height: 60px; display: flex; align-items: center; padding-left: 86px; }
.tree-row.top-level { margin-top: 20px; padding-left: 62px; }
.tree-row.current { background: #d9d9d9; }
.tree-row.drive { padding-left: 81px; }
.tree-row.share { padding-top: 16px; }
.fold { width: 24px; height: 36px; }
.tree-bar { background: #f0f0f0; padding: 12px 0; fill: #606060; justify-content: flex-start; }
.tree-bar .thumb { width: 42px; height: 471px; margin: 340px 0 auto; background: #cdcdcd; }
.files { flex: 1; border-left: 4px solid #f6f6f6; padding-left: 31px; }
table { border-collapse: separate; border-spacing: 0; table-layout: fixed; width: 1455px; }
.c-gap { width: 10px; }
.c-check { width: 43px; }
.c-name { width: 601px; }
.c-date, .c-type { width: 301px; }
.c-size { width: 189px; }
th { height: 68px; padding: 3px 0 0 16px; text-align: left; font-weight: 400; color: #4c5b70; border-right: 1px solid #e3e3e3; }
th:first-child { padding: 0 0 0 3px; border: 0; }
th.sorted { padding-left: 9px; position: relative; }
.sort { position: absolute; left: 267px; top: 5px; }
tbody::before { content: ""; display: block; height: 14px; }
td { height: 53px; padding: 4px 0 0 16px; color: #6d6d6d; white-space: nowrap; }
td:first-child, td:last-child { padding: 0; }
td:nth-child(2) { padding: 0 0 0 10px; }
td:nth-child(3) { padding-left: 10px; color: #000; }
td:nth-child(6) { text-align: right; padding: 4px 11px 0 0; }
.doc { float: left; width: 28px; height: 36px; margin-right: 17px; }
.picked td:not(:first-child):not(:last-child) { background: #cce8ff; }
.focused td:not(:first-child):not(:last-child) { box-shadow: inset 0 1px #99d1ff, inset 0 -1px #99d1ff; }
input[type="checkbox"] { appearance: none; display: grid; place-items: center; width: 32px; height: 32px; margin: 0; border: 2px solid #333; background: #fff; }
input[type="checkbox"]:checked::after { content: ""; width: 20px; height: 9px; border: solid #333; border-width: 0 0 2px 2px; rotate: -48deg; translate: 0 -2px; }

.picker-foot { display: grid; grid-template-columns: 461px 698px 1fr; align-items: center; row-gap: 14px; height: 230px; padding: 73px 43px 30px 0; align-content: start; }
.picker-foot label { text-align: right; padding-right: 14px; }
.combo { display: flex; align-items: center; height: 50px; border: 2px solid #7a7a7a; background: #fff; padding: 0 9px 0 4px; gap: 18px; }
.combo input { flex: 1; min-width: 0; border: 0; padding: 0; outline: 0; background: none; }
.filter { display: grid; align-items: center; height: 50px; margin-left: 31px; border: 2px solid #adadad; background: #e1e1e1; }
.filter > * { grid-area: 1 / 1; }
.filter select { appearance: none; border: 0; background: none; padding: 0 0 0 2px; }
.filter svg { justify-self: end; margin-right: 10px; }
.picker-actions { grid-column: 3; display: flex; gap: 32px; margin-left: 31px; }
.picker-actions button { flex: 1; height: 63px; border: 2px solid #adadad; background: #e1e1e1; padding: 0; }
.picker-actions .primary { border: 3px solid #0078d7; }
.resize { position: absolute; right: 6px; bottom: 4px; }
```
